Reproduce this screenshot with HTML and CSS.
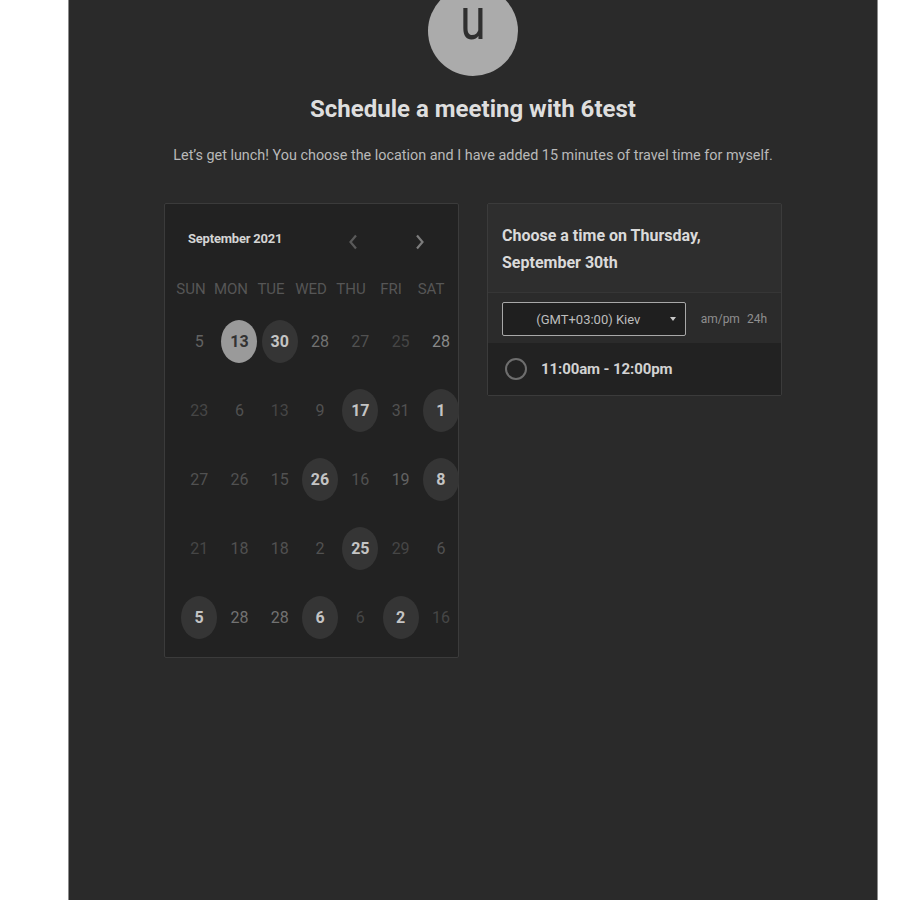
FILE: index.html
```html
<!DOCTYPE html>
<html>
<head>
<meta charset="utf-8">
<link rel="stylesheet" href="styles.css">
</head>
<body>
<div class="panel">
  <div class="avatar"><span class="initial">u</span></div>
  <h1 class="title">Schedule a meeting with 6test</h1>
  <p class="subtitle">Let’s get lunch! You choose the location and I have added 15 minutes of travel time for myself.</p>
  <div class="cards">
    <div class="calendar">
      <div class="cal-head">
        <div class="month">September 2021</div>
        <div class="nav">
          <button class="nav-btn" aria-label="previous"><svg width="12" height="16" viewBox="0 0 12 16"><path d="M9 1.5 L3.5 8 L9 14.5" fill="none" stroke="#5a5a5a" stroke-width="2.2"/></svg></button>
          <button class="nav-btn" aria-label="next"><svg width="12" height="16" viewBox="0 0 12 16"><path d="M3 1.5 L8.5 8 L3 14.5" fill="none" stroke="#7c7c7c" stroke-width="2.2"/></svg></button>
        </div>
      </div>
      <div class="weekdays">
        <span>SUN</span><span>MON</span><span>TUE</span><span>WED</span><span>THU</span><span>FRI</span><span>SAT</span>
      </div>
      <div class="days">
        <span class="d c3">5</span><span class="d sel">13</span><span class="d av">30</span><span class="d c2">28</span><span class="d c4">27</span><span class="d c5">25</span><span class="d c1">28</span>
        <span class="d c5">23</span><span class="d c4">6</span><span class="d c5">13</span><span class="d c4">9</span><span class="d av">17</span><span class="d c4">31</span><span class="d av">1</span>
        <span class="d c4">27</span><span class="d c4">26</span><span class="d c4">15</span><span class="d av">26</span><span class="d c4">16</span><span class="d c3">19</span><span class="d av">8</span>
        <span class="d c5">21</span><span class="d c4">18</span><span class="d c4">18</span><span class="d c4">2</span><span class="d av">25</span><span class="d c5">29</span><span class="d c4">6</span>
        <span class="d av">5</span><span class="d c2">28</span><span class="d c2">28</span><span class="d av">6</span><span class="d c5">6</span><span class="d av">2</span><span class="d c5">16</span>
      </div>
    </div>
    <div class="times">
      <div class="times-head">Choose a time on Thursday,<br>September 30th</div>
      <div class="tz-row">
        <div class="tz-select"><span class="tz-label">(GMT+03:00) Kiev</span><span class="caret"></span></div>
        <div class="fmt"><span>am/pm</span><span>24h</span></div>
      </div>
      <div class="slot">
        <span class="radio"></span>
        <span class="slot-text">11:00am - 12:00pm</span>
      </div>
    </div>
  </div>
</div>
</body>
</html>
```
FILE: styles.css
```css
html, body {
  margin: 0;
  padding: 0;
  background: #ffffff;
  font-family: Roboto, "Liberation Sans", sans-serif;
}
.panel {
  width: 808px;
  margin-left: 68px;
  height: 900px;
  background: #2a2a2a;
  border-left: 1px solid #8c8c8c;
  border-right: 1px solid #8c8c8c;
  overflow: hidden;
  display: flex;
  flex-direction: column;
  align-items: center;
}
.avatar {
  width: 90px;
  height: 90px;
  border-radius: 50%;
  background: #ababab;
  margin-top: -14px;
  display: flex;
  justify-content: center;
  align-items: flex-start;
}
.initial {
  display: block;
  font-size: 46px;
  line-height: 26px;
  color: #2f2f2f;
  margin-top: 24px;
  transform: scaleY(1.3);
  transform-origin: center 28.7px;
}
.title {
  margin: 18px 0 0;
  font-size: 24px;
  line-height: 30px;
  font-weight: 700;
  color: #dedede;
}
.subtitle {
  margin: 22px 0 0;
  font-size: 14.4px;
  line-height: 20px;
  color: #b9b9b9;
}
.cards {
  display: flex;
  gap: 28px;
  align-items: flex-start;
  margin-top: 37px;
}
.calendar {
  box-sizing: content-box;
  width: 280px;
  height: 453px;
  background: #222222;
  border: 1px solid #3b3b3b;
  border-radius: 2px;
  padding: 0 7px 0 6px;
}
.cal-head {
  display: flex;
  align-items: center;
  height: 20px;
  margin-top: 24px;
  padding-left: 17px;
}
.month {
  font-size: 13px;
  font-weight: 700;
  color: #d4d4d4;
  letter-spacing: -0.2px;
}
.nav {
  margin-left: auto;
  margin-right: 19px;
  display: flex;
  gap: 43px;
  margin-top: 8px;
}
.nav-btn {
  width: 24px;
  height: 20px;
  background: none;
  border: none;
  padding: 0;
  display: flex;
  align-items: center;
  justify-content: center;
}
.weekdays {
  display: grid;
  grid-template-columns: repeat(7, 40px);
  height: 30px;
  margin-top: 26px;
  align-items: center;
}
.weekdays span {
  text-align: center;
  font-size: 15px;
  color: #565656;
}
.days {
  display: grid;
  grid-template-columns: repeat(7, 40.3px);
  grid-auto-rows: 69px;
  margin-top: 3px;
  margin-left: 8px;
}
.d {
  justify-self: center;
  align-self: center;
  width: 36px;
  height: 43px;
  border-radius: 50%;
  display: flex;
  align-items: center;
  justify-content: center;
  font-size: 16px;
}
.c1 { color: #8a8a8a; }
.c2 { color: #727272; }
.c3 { color: #636363; }
.c4 { color: #515151; }
.c5 { color: #464646; }
.av {
  background: #353535;
  color: #c4c4c4;
  font-weight: 700;
}
.sel {
  background: #9a9a9a;
  color: #333333;
  font-weight: 700;
}
.times {
  width: 293px;
  background: #2b2b2b;
  border: 1px solid #3b3b3b;
  border-radius: 2px;
}
.times-head {
  padding: 18px 14px 16px;
  font-size: 16px;
  line-height: 27px;
  font-weight: 700;
  color: #dadada;
  background: #2e2e2e;
  border-bottom: 1px solid #363636;
}
.tz-row {
  display: flex;
  align-items: center;
  padding: 9px 14px 7px;
  background: #2b2b2b;
}
.tz-select {
  box-sizing: border-box;
  width: 188px;
  height: 34px;
  border: 1px solid #a8a8a8;
  border-radius: 2px;
  background: #1f1f1f;
  display: flex;
  align-items: center;
  position: relative;
  justify-content: center;
  font-size: 13px;
  color: #bdbdbd;
}
.tz-label {
  margin-left: -11px;
}
.caret {
  position: absolute;
  right: 9px;
  top: 14px;
  width: 0;
  height: 0;
  border-left: 3px solid transparent;
  border-right: 3px solid transparent;
  border-top: 4px solid #c8c8c8;
}
.fmt {
  margin-left: 15px;
  display: flex;
  gap: 7px;
  font-size: 12px;
  color: #8f8f8f;
}
.slot {
  display: flex;
  align-items: center;
  height: 52px;
  background: #222222;
  padding-left: 17px;
}
.radio {
  width: 18px;
  height: 18px;
  border: 2px solid #6e6e6e;
  border-radius: 50%;
}
.slot-text {
  margin-left: 14px;
  font-size: 15px;
  font-weight: 700;
  color: #d2d2d2;
  letter-spacing: -0.1px;
}
```
